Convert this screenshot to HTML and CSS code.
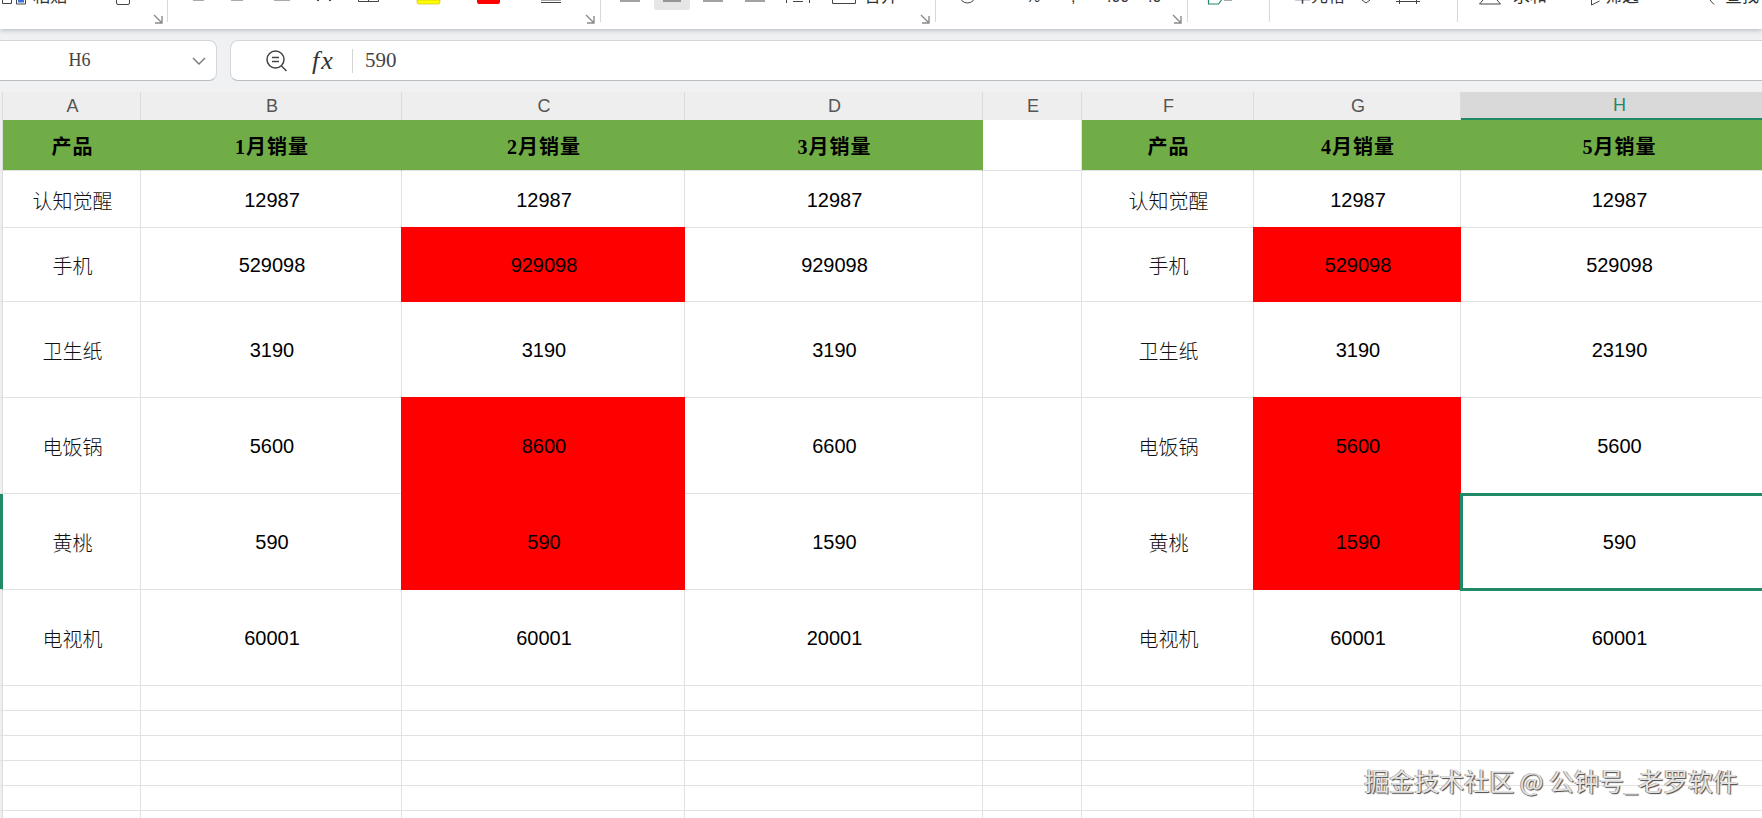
FILE: index.html
```html
<!DOCTYPE html>
<html lang="zh-CN">
<head>
  <meta charset="UTF-8">
  <title>销量表</title>
  <link rel="stylesheet" href="styles.css">
</head>
<body>

  <div class="toolbar">
    <div class="group g1">
      <svg width="167" height="22">
        <path d="M2.500 0v3.500h9V0" class="ink"/>
        <path d="M16.500 0v4h9V0" class="ink"/><rect x="18" y="0" width="6" height="2.500" fill="#3d6fd8"/>
        <text x="33" y="2" class="cut">粘贴</text>
        <path d="M116.500 0v3a1.500 1.500 0 0 0 1.500 1.500h10a1.500 1.500 0 0 0 1.500-1.500V0" class="ink"/>
        <path d="M154 15l8 8M155 23h7v-7" class="more"/>
      </svg>
    </div>
    <div class="group g2">
      <svg width="432" height="22">
        <path d="M25 .5h11M63 .5h12M106 .5h16" class="soft"/>
        <path d="M149 .5h2M161 .5h2" class="ink"/>
        <path d="M190.500 0v1.500h20V0M200.500 0v1.500" class="ink"/>
        <path d="M249 0h23v2a2 2 0 0 1-2 2h-19a2 2 0 0 1-2-2z" fill="#ffff00" stroke="#c9b400" stroke-width=".6"/>
        <path d="M309 0h23v2a2 2 0 0 1-2 2h-19a2 2 0 0 1-2-2z" fill="#ff0000"/>
        <path d="M373 .5h20" class="soft"/><path d="M373 2.500h20" class="ink"/>
        <path d="M418 15l8 8M419 23h7v-7" class="more"/>
      </svg>
    </div>
    <div class="group g3">
      <svg width="334" height="22">
        <path d="M53 0h36v7a3 3 0 0 1-3 3H56a3 3 0 0 1-3-3z" fill="#e6e6e6"/>
        <path d="M19 1h20M62 1h18M102 1h20M144 1h20" class="ink"/>
        <path d="M185.500 0v3M208.500 0v3M192 1.500h10" class="ink"/>
        <path d="M231.500 0v3.500h23V0" class="ink"/>
        <text x="263" y="2" class="cut">合并</text>
        <path d="M320 15l8 8M321 23h7v-7" class="more"/>
      </svg>
    </div>
    <div class="group g4">
      <svg width="251" height="22">
        <circle cx="31.500" cy="-5" r="8" class="ink"/>
        <text x="90" y="2" class="cut-num">%</text>
        <text x="135" y="2" class="cut-num">,</text>
        <text x="171" y="2" class="cut-num">.00</text>
        <text x="212" y="2" class="cut-num">.0</text>
        <path d="M237 15l8 8M238 23h7v-7" class="more"/>
      </svg>
    </div>
    <div class="group g5">
      <svg width="81" height="22">
        <path d="M20.500 0v4h10l3-4" fill="none" stroke="#1f8a65" stroke-width="1.200"/>
        <path d="M36 .5h8" class="soft"/>
      </svg>
    </div>
    <div class="group g6">
      <svg width="187" height="22">
        <text x="24" y="2" class="cut">单元格</text>
        <path d="M92 0l4 3 4-3" class="ink"/>
        <path d="M126 1.500h24M129.500 0v4M146.500 0v4" class="ink"/>
      </svg>
    </div>
    <div class="group g7">
      <svg width="304" height="22">
        <path d="M25 0l-3.500 4h21L39 0" class="ink"/>
        <text x="55" y="2" class="cut">求和</text>
        <path d="M133.500 0v5l8-4" class="ink"/>
        <text x="147" y="2" class="cut">筛选</text>
        <path d="M252 0l4 4.500" class="ink"/>
        <text x="267" y="2" class="cut">查找</text>
      </svg>
    </div>
  </div>

  <div class="formula-row">
    <div class="name-box">
      <span class="cell-name">H6</span>
      <svg width="14" height="8" viewBox="0 0 14 8"><path d="M1 1l6 6 6-6" class="chev"/></svg>
    </div>
    <div class="formula-bar">
      <svg class="lookup" width="24" height="24" viewBox="0 0 24 24">
        <circle cx="10.500" cy="10.500" r="8.500" class="lens"/>
        <path d="M7 8.500h7M7 12.500h7M16.500 17l5 5" class="lens"/>
      </svg>
      <span class="fx">fx</span>
      <span class="bar-sep"></span>
      <span class="bar-value">590</span>
    </div>
  </div>

  <table class="sheet">
    <colgroup>
      <col class="c-gut"><col class="c-a"><col class="c-b"><col class="c-c"><col class="c-d">
      <col class="c-e"><col class="c-f"><col class="c-g"><col class="c-h">
    </colgroup>
    <thead>
      <tr>
        <th class="gut"></th>
        <th>A</th><th>B</th><th>C</th><th>D</th><th>E</th><th>F</th><th>G</th>
        <th class="col-on">H</th>
      </tr>
    </thead>
    <tbody>
      <tr class="r-head">
        <td class="gut"></td>
        <td class="title">产品</td><td class="title">1月销量</td><td class="title">2月销量</td><td class="title">3月销量</td>
        <td></td>
        <td class="title">产品</td><td class="title">4月销量</td><td class="title">5月销量</td>
      </tr>
      <tr class="r1">
        <td class="gut"></td>
        <td class="name">认知觉醒</td><td>12987</td><td>12987</td><td>12987</td>
        <td></td>
        <td class="name">认知觉醒</td><td>12987</td><td>12987</td>
      </tr>
      <tr class="r2">
        <td class="gut"></td>
        <td class="name">手机</td><td>529098</td><td class="hit">929098</td><td>929098</td>
        <td></td>
        <td class="name">手机</td><td class="hit">529098</td><td>529098</td>
      </tr>
      <tr class="r3">
        <td class="gut"></td>
        <td class="name">卫生纸</td><td>3190</td><td>3190</td><td>3190</td>
        <td></td>
        <td class="name">卫生纸</td><td>3190</td><td>23190</td>
      </tr>
      <tr class="r4">
        <td class="gut"></td>
        <td class="name">电饭锅</td><td>5600</td><td class="hit">8600</td><td>6600</td>
        <td></td>
        <td class="name">电饭锅</td><td class="hit">5600</td><td>5600</td>
      </tr>
      <tr class="r5">
        <td class="gut gut-on"></td>
        <td class="name">黄桃</td><td>590</td><td class="hit">590</td><td>1590</td>
        <td></td>
        <td class="name">黄桃</td><td class="hit">1590</td><td class="picked">590</td>
      </tr>
      <tr class="r6">
        <td class="gut"></td>
        <td class="name">电视机</td><td>60001</td><td>60001</td><td>20001</td>
        <td></td>
        <td class="name">电视机</td><td>60001</td><td>60001</td>
      </tr>
      <tr class="blank"><td class="gut"></td><td></td><td></td><td></td><td></td><td></td><td></td><td></td><td></td></tr>
      <tr class="blank"><td class="gut"></td><td></td><td></td><td></td><td></td><td></td><td></td><td></td><td></td></tr>
      <tr class="blank"><td class="gut"></td><td></td><td></td><td></td><td></td><td></td><td></td><td></td><td></td></tr>
      <tr class="blank"><td class="gut"></td><td></td><td></td><td></td><td></td><td></td><td></td><td></td><td></td></tr>
      <tr class="blank"><td class="gut"></td><td></td><td></td><td></td><td></td><td></td><td></td><td></td><td></td></tr>
      <tr class="blank"><td class="gut"></td><td></td><td></td><td></td><td></td><td></td><td></td><td></td><td></td></tr>
    </tbody>
  </table>

  <div class="watermark">掘金技术社区 @ 公钟号_老罗软件</div>

</body>
</html>
```

FILE: styles.css
```css
body {
  margin: 0;
  height: 818px;
  overflow: hidden;
  position: relative;
  background-color: #fff;
  font-family: "Liberation Sans", "Noto Sans CJK SC", sans-serif;
  color: #000;
}

/* ribbon, only its bottom edge is in the picture */
.toolbar {
  display: flex;
  height: 29px;
  background-color: #fff;
  box-shadow: 0 1px 5px rgba(60, 70, 80, 0.35);
  position: relative;
  overflow: hidden;
}

.group {
  height: 22px;
  flex: none;
  border-right: 1px solid #d8d8d8;
}

.group svg {
  display: block;
  overflow: hidden;
  height: 24px;
}

.g1 { width: 167px; }
.g2 { width: 432px; }
.g3 { width: 334px; }
.g4 { width: 251px; }
.g5 { width: 81px; }
.g6 { width: 187px; }
.g7 { border-right: none; }

.ink {
  fill: none;
  stroke: #444;
  stroke-width: 1;
}

.soft {
  fill: none;
  stroke: #aaa;
  stroke-width: 1;
}

.more {
  fill: none;
  stroke: #8a8a8a;
  stroke-width: 1.4;
}

.cut {
  font-family: "Noto Sans CJK SC", sans-serif;
  font-size: 17px;
  fill: #333;
}

.cut-num {
  font-family: "Liberation Sans", sans-serif;
  font-size: 16px;
  fill: #333;
}

/* name box and formula bar */
.formula-row {
  display: flex;
  gap: 13px;
  height: 41px;
  padding: 11px 0;
  background-color: #eff1f3;
}

.name-box {
  flex: none;
  width: 217px;
  box-sizing: border-box;
  display: flex;
  align-items: center;
  background-color: #fff;
  border: 1px solid #d4d6d9;
  border-bottom-color: #bdbdbd;
  border-left: none;
  border-radius: 0 8px 8px 0;
}

.cell-name {
  width: 159px;
  text-align: center;
  font-family: "Liberation Serif", serif;
  font-size: 18px;
  color: #444;
}

.name-box svg {
  margin-left: 33px;
}

.chev {
  fill: none;
  stroke: #777;
  stroke-width: 1.4;
}

.formula-bar {
  flex: 1;
  display: flex;
  align-items: center;
  box-sizing: border-box;
  padding-left: 34px;
  background-color: #fff;
  border: 1px solid #d4d6d9;
  border-bottom-color: #bdbdbd;
  border-right: none;
  border-radius: 8px 0 0 8px;
}

.lens {
  fill: none;
  stroke: #444;
  stroke-width: 1.5;
}

.fx {
  margin-left: 23px;
  width: 26px;
  font-family: "Liberation Serif", serif;
  font-style: italic;
  font-size: 26px;
  letter-spacing: 2px;
  color: #333;
}

.bar-sep {
  width: 1px;
  height: 24px;
  margin-left: 14px;
  background-color: #d5d5d5;
}

.bar-value {
  margin-left: 12px;
  font-family: "Liberation Serif", serif;
  font-size: 21px;
  color: #444;
}

/* sheet */
.sheet {
  table-layout: fixed;
  width: 1777px;
  border-collapse: separate;
  border-spacing: 0;
}

.c-gut { width: 3px; }
.c-a { width: 138px; }
.c-b { width: 261px; }
.c-c { width: 283px; }
.c-d { width: 298px; }
.c-e { width: 99px; }
.c-f { width: 172px; }
.c-g { width: 207px; }
.c-h { width: 316px; }

th, td {
  box-sizing: border-box;
  padding: 2px 0 0 2px;
  text-align: center;
  border-right: 1px solid #e2e2e2;
  border-bottom: 1px solid #e2e2e2;
  font-size: 20px;
  font-weight: normal;
}

th {
  height: 28px;
  padding-top: 0;
  background-color: #eeeeee;
  color: #555;
  font-size: 18px;
  border-bottom: none;
  border-right-color: #dcdcdc;
}

th.col-on {
  background-color: #d9d9d9;
  color: #1f8a65;
  border-bottom: 2px solid #1f8a65;
}

.gut {
  padding: 0;
  background-color: #efefef;
  border-right-color: #dcdcdc;
  border-bottom-color: #e2e2e2;
}

.gut-on {
  background-color: #1f8a65;
  border-right-color: #1f8a65;
}

.r-head td { height: 51px; }
.r1 td { height: 57px; }
.r2 td { height: 74px; }
.r3 td { height: 96px; }
.r4 td { height: 96px; }
.r5 td { height: 96px; }
.r6 td { height: 96px; }
.blank td { height: 25px; }

td.title {
  padding-top: 0;
  background-color: #70ad47;
  border-right-color: #70ad47;
  font-family: "Liberation Serif", "Noto Sans CJK SC", serif;
  font-weight: bold;
  letter-spacing: 1px;
}

td.name {
  font-family: "Noto Sans CJK SC", sans-serif;
  font-weight: 300;
  color: #111;
}

td.hit {
  background-color: #ff0000;
  border-color: #ff0000;
  box-shadow: -1px -1px 0 #ff0000, 0 -1px 0 #ff0000, -1px 0 0 #ff0000;
}

td.picked {
  outline: 3px solid #1f8a65;
  outline-offset: -2px;
}

.watermark {
  position: absolute;
  right: 24px;
  bottom: 25px;
  font-family: "Noto Sans CJK SC", sans-serif;
  font-size: 25px;
  line-height: 26px;
  color: #e4e4e4;
  text-shadow: 1px 1px 1px #444, -1px 0 0 #999;
  white-space: nowrap;
}
```
